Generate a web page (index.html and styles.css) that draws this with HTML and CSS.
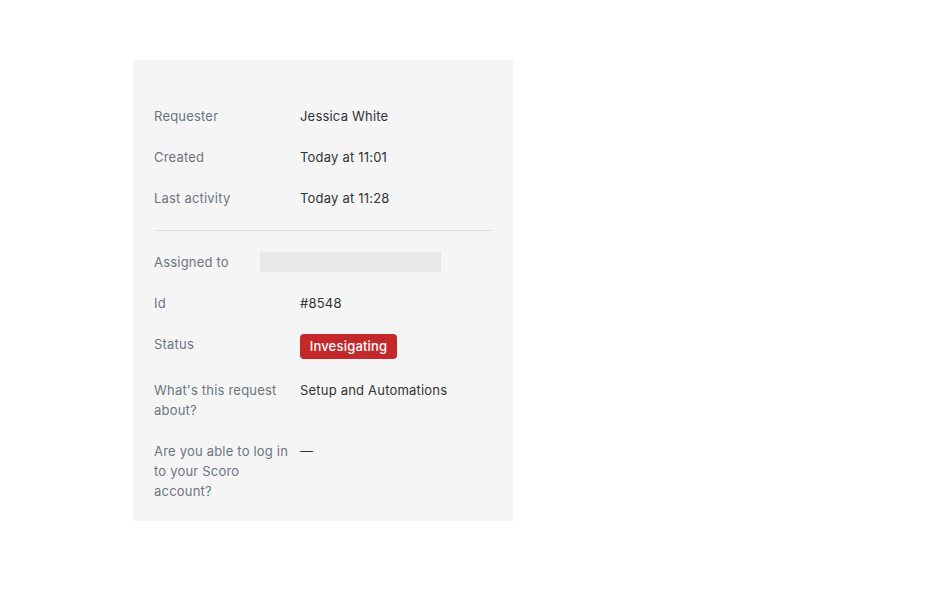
FILE: index.html
```html
<!DOCTYPE html>
<html>
<head>
<meta charset="utf-8">
<link rel="stylesheet" href="styles.css">
</head>
<body>
<div class="panel">
  <div class="group">
    <div class="row"><div class="label">Requester</div><div class="value">Jessica White</div></div>
    <div class="row"><div class="label">Created</div><div class="value">Today at 11:01</div></div>
    <div class="row"><div class="label">Last activity</div><div class="value">Today at 11:28</div></div>
  </div>
  <div class="divider"></div>
  <div class="group">
    <div class="row"><div class="label">Assigned to</div><div class="value"><div class="skeleton"></div></div></div>
    <div class="row"><div class="label">Id</div><div class="value">#8548</div></div>
    <div class="row"><div class="label">Status</div><div class="value"><span class="badge">Invesigating</span></div></div>
    <div class="row"><div class="label">What's this request about?</div><div class="value">Setup and Automations</div></div>
    <div class="row"><div class="label">Are you able to log in to your Scoro account?</div><div class="value">—</div></div>
  </div>
</div>
</body>
</html>
```
FILE: styles.css
```css
html, body {
  margin: 0;
  padding: 0;
  background: #ffffff;
}
body {
  font-family: Inter, "Noto Sans", sans-serif;
  font-size: 13px;
  line-height: 20px;
  letter-spacing: 0.2px;
  padding: 60px 0 0 133px;
}
.panel {
  width: 380px;
  box-sizing: border-box;
  background: #f5f5f5;
  padding: 46px 21px 20px 21px;
}
.group {
  display: flex;
  flex-direction: column;
  gap: 21px;
}
.row {
  display: flex;
  align-items: flex-start;
}
.label {
  width: 146px;
  flex: none;
  color: #6b7482;
  padding-right: 6px;
  box-sizing: border-box;
}
.value {
  color: #303338;
  flex: 1;
}
.divider {
  height: 1px;
  background: #dedede;
  margin: 22px 0 21px 0;
}
.skeleton {
  margin-left: -40px;
  width: 181px;
  height: 20px;
  background: #e8e8e8;
}
.badge {
  display: inline-block;
  background: #c4282a;
  color: #ffffff;
  font-weight: 500;
  height: 25px;
  line-height: 25px;
  border-radius: 4px;
  box-sizing: border-box;
  width: 97px;
  text-align: center;
}
```
